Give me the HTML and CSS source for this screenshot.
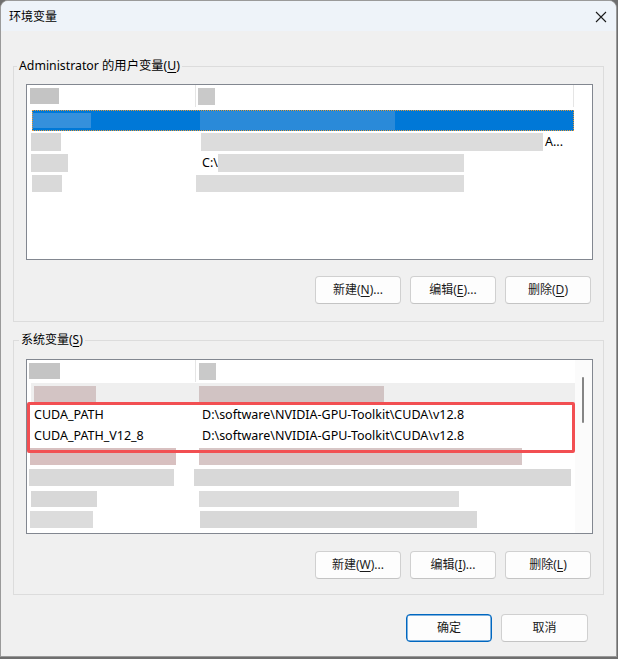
FILE: index.html
```html
<!DOCTYPE html>
<html lang="zh-CN">
<head>
<meta charset="utf-8">
<title>环境变量</title>
<link rel="stylesheet" href="styles.css">
</head>
<body>
<div class="window">
  <div class="titlebar">
    <span class="title">环境变量</span>
    <svg class="close" width="12" height="12" viewBox="0 0 12 12"><path d="M1 1 L11 11 M11 1 L1 11" stroke="#1b1b1b" stroke-width="1.1" fill="none"/></svg>
  </div>
  <div class="content">
    <fieldset class="group group-user">
      <legend>Administrator 的用户变量(<u>U</u>)</legend>
      <div class="list list-user">
        <div class="list-header header-user">
          <div class="col col-name"><span class="blk b-head" style="width:29px;margin-left:3px;height:16px"></span></div>
          <div class="col col-value"><span class="blk b-head2" style="width:17px;margin-left:2px;height:17px"></span></div>
          <div class="col col-rest"></div>
        </div>
        <div class="row selected">
          <div class="col col-name"><span class="blk b-sel1" style="width:59px;margin-left:0;height:15px"></span></div>
          <div class="col col-value"><span class="blk b-sel2" style="width:195px;margin-left:4px;height:19px"></span></div>
        </div>
        <div class="row">
          <div class="col col-name"><span class="blk b-g1" style="width:30px;margin-left:4px;height:18px"></span></div>
          <div class="col col-value"><span class="blk b-g2" style="width:342px;margin-left:5px;height:18px"></span><span class="txt tail">A...</span></div>
        </div>
        <div class="row">
          <div class="col col-name"><span class="blk b-g3" style="width:37px;margin-left:4px;height:18px"></span></div>
          <div class="col col-value"><span class="txt">C:\</span><span class="blk b-g2" style="width:246px;margin-left:0;height:18px"></span></div>
        </div>
        <div class="row">
          <div class="col col-name"><span class="blk b-g3" style="width:30px;margin-left:5px;height:17px"></span></div>
          <div class="col col-value"><span class="blk b-g2" style="width:268px;margin-left:0;height:17px"></span></div>
        </div>
      </div>
      <div class="buttons">
        <button class="btn">新建(<u>N</u>)...</button>
        <button class="btn">编辑(<u>E</u>)...</button>
        <button class="btn">删除(<u>D</u>)</button>
      </div>
    </fieldset>

    <fieldset class="group group-sys">
      <legend>系统变量(<u>S</u>)</legend>
      <div class="list list-sys">
        <div class="list-body">
          <div class="list-header header-sys">
            <div class="col col-name"><span class="blk b-head" style="width:31px;margin-left:2px;height:16px"></span></div>
            <div class="col col-value"><span class="blk b-head2" style="width:17px;margin-left:3px;height:17px"></span></div>
          </div>
          <div class="row hover">
            <div class="col col-name"><span class="blk b-p1" style="width:62px;margin-left:3px;height:16px"></span></div>
            <div class="col col-value"><span class="blk b-p2" style="width:185px;margin-left:3px;height:16px"></span></div>
          </div>
          <div class="row">
            <div class="col col-name"><span class="txt">CUDA_PATH</span></div>
            <div class="col col-value"><span class="txt">D:\software\NVIDIA-GPU-Toolkit\CUDA\v12.8</span></div>
          </div>
          <div class="row">
            <div class="col col-name"><span class="txt">CUDA_PATH_V12_8</span></div>
            <div class="col col-value"><span class="txt">D:\software\NVIDIA-GPU-Toolkit\CUDA\v12.8</span></div>
          </div>
          <div class="row">
            <div class="col col-name"><span class="blk b-p3" style="width:146px;margin-left:3px;height:17px"></span></div>
            <div class="col col-value"><span class="blk b-p4" style="width:323px;margin-left:3px;height:17px"></span></div>
          </div>
          <div class="row">
            <div class="col col-name"><span class="blk b-g3" style="width:145px;margin-left:2px;height:17px"></span></div>
            <div class="col col-value"><span class="blk b-g4" style="width:377px;margin-left:-2px;height:17px"></span></div>
          </div>
          <div class="row">
            <div class="col col-name"><span class="blk b-g1" style="width:66px;margin-left:4px;height:16px"></span></div>
            <div class="col col-value"><span class="blk b-g2" style="width:260px;margin-left:3px;height:16px"></span></div>
          </div>
          <div class="row">
            <div class="col col-name"><span class="blk b-g2" style="width:63px;margin-left:3px;height:17px"></span></div>
            <div class="col col-value"><span class="blk b-g4" style="width:277px;margin-left:4px;height:17px"></span></div>
          </div>
        </div>
        <div class="scrollbar"><div class="thumb"></div></div>
        <div class="highlight"></div>
      </div>
      <div class="buttons">
        <button class="btn">新建(<u>W</u>)...</button>
        <button class="btn">编辑(<u>I</u>)...</button>
        <button class="btn">删除(<u>L</u>)</button>
      </div>
    </fieldset>

    <div class="footer">
      <button class="btn primary">确定</button>
      <button class="btn cancel">取消</button>
    </div>
  </div>
</div>
</body>
</html>
```

FILE: styles.css
```css
* { box-sizing: border-box; }
html, body { margin: 0; padding: 0; }
body {
  background: #6f6f6f;
  width: 618px;
  height: 659px;
  overflow: hidden;
  font-family: "Noto Sans", "Noto Sans CJK SC", sans-serif;
  font-size: 12px;
  color: #000;
}
.window {
  width: 617px;
  height: 657px;
  background: #f0f0f0;
  border: 1px solid #9a9a9a;
  border-radius: 8px 8px 0 0;
  overflow: hidden;
  display: flex;
  flex-direction: column;
}
.titlebar {
  height: 30px;
  background: #eef3f9;
  display: flex;
  align-items: center;
  justify-content: space-between;
  padding: 0 8px 0 8px;
  flex-shrink: 0;
}
.title {
  font-family: "Noto Sans CJK SC", sans-serif;
  font-size: 12px;
  line-height: 16px;
  color: #000;
}
.close { margin-right: 1px; margin-top: 1px; }
.content {
  padding: 27px 12px 0 12px;
  display: flex;
  flex-direction: column;
}
.group {
  margin: 0;
  border: 1px solid #dcdcdc;
  padding: 0 11px 0 12px;
  min-width: 0;
}
.group legend {
  padding: 0 2px;
  margin-left: -9px;
  line-height: 16px;
  font-size: 12.3px;
}
.group-sys legend { margin-left: -7px; font-size: 12px; }
.group-user .list { margin-top: 10px; }
.group-user { padding-bottom: 17px; }
.group-sys { margin-top: 10px; padding-bottom: 15px; }
.group-sys .list { margin-top: 11px; }
u { text-decoration: underline; text-underline-offset: 2px; }

.list {
  position: relative;
  width: 567px;
  background: #fff;
  border: 1px solid #828790;
  overflow: hidden;
  display: flex;
}
.list-user { height: 176px; flex-direction: column; }
.list-sys { height: 175px; }
.list-body { flex: 1; display: flex; flex-direction: column; }

.list-header { display: flex; align-items: center; }
.header-user { height: 25px; }
.header-sys { height: 23px; }
.list-header .col-name { border-right: 1px solid #e5e5e5; height: 22px; align-self: flex-start; display: flex; align-items: center; }
.list-header .col-value { height: 22px; align-self: flex-start; display: flex; align-items: center; }
.header-user .col-value { width: 378px; border-right: 1px solid #e5e5e5; flex: none; }

.col { display: flex; align-items: center; height: 100%; flex: none; }
.col-name { width: 169px; }
.col-value { flex: 1; min-width: 0; }

.row {
  height: 21px;
  display: flex;
  align-items: center;
  white-space: nowrap;
}
.row.selected {
  background: #0078d7;
  margin: 0 18px 0 5px;
  outline: 1px dotted #e39a3a;
  outline-offset: -1px;
}
.row.selected .col-name { width: 164px; }
.row.hover { background: #efefef; margin-left: 4px; margin-right: 0; }
.row.hover .col-name { width: 165px; }
.row.hover .blk:first-child { margin-left: -1px; }

.txt { line-height: 21px; padding-left: 7px; font-size: 12.5px; }
.col-value .txt { padding-left: 6px; }
.txt.tail { padding-left: 2px; }

.blk { display: inline-block; flex: none; }
.b-head { background: #c4c4c4; }
.b-head2 { background: #c9c9c9; }
.b-sel1 { background: #3590dc; }
.b-sel2 { background: #2a8ad9; }
.b-g1 { background: #d8d8d8; }
.b-g2 { background: #dcdcdc; }
.b-g3 { background: #d9d9d9; }
.b-g4 { background: #d8d8d8; }
.b-p1 { background: #d3c4c4; }
.b-p2 { background: #d1c3c3; }
.b-p3 { background: #d8c0c0; }
.b-p4 { background: #d7c6c6; }

.scrollbar {
  width: 17px;
  flex: none;
  background: #fbfbfb;
  position: relative;
}
.thumb {
  position: absolute;
  left: 7px;
  top: 17px;
  width: 2px;
  height: 46px;
  border-radius: 1px;
  background: #858585;
}
.highlight {
  position: absolute;
  left: 0;
  top: 42px;
  width: 548px;
  height: 51px;
  border: 3px solid #f24f52;
  border-radius: 2px;
}

.buttons {
  display: flex;
  justify-content: flex-end;
  gap: 9px;
  padding-right: 1px;
}
.group-user .buttons { margin-top: 16px; }
.group-sys .buttons { margin-top: 17px; }
.btn {
  width: 86px;
  height: 28px;
  font-family: "Noto Sans", "Noto Sans CJK SC", sans-serif;
  font-size: 12px;
  color: #1a1a1a;
  background: #fdfdfd;
  border: 1px solid #d0d0d0;
  border-bottom-color: #c4c4c4;
  border-radius: 4px;
  padding: 0;
  line-height: 16px;
}
.footer {
  display: flex;
  justify-content: flex-end;
  gap: 9px;
  margin-top: 19px;
  padding-right: 16px;
}
.btn.primary {
  border: 1px solid #0067c0;
  box-shadow: inset 0 0 0 0.5px #0067c0;
}
.btn.cancel { width: 87px; }
```
